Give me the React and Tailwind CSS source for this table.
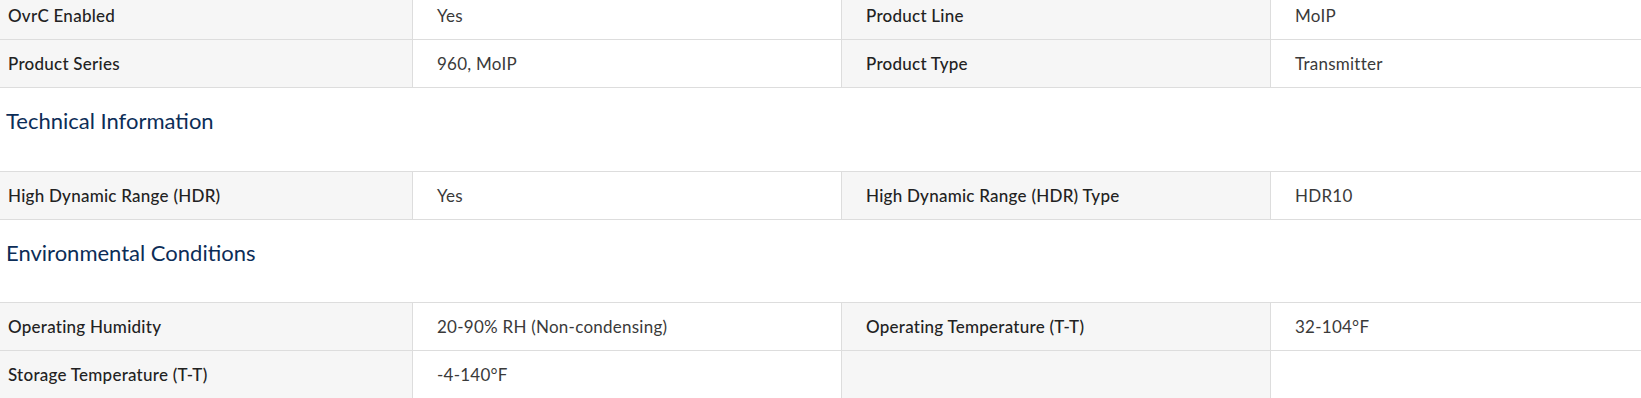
const sections = [
  {
    title: null,
    rows: [
      ["OvrC Enabled", "Yes", "Product Line", "MoIP"],
      ["Product Series", "960, MoIP", "Product Type", "Transmitter"],
    ],
  },
  {
    title: "Technical Information",
    height: "h-[83px]",
    rows: [["High Dynamic Range (HDR)", "Yes", "High Dynamic Range (HDR) Type", "HDR10"]],
  },
  {
    title: "Environmental Conditions",
    height: "h-[82px]",
    rows: [
      ["Operating Humidity", "20-90% RH (Non-condensing)", "Operating Temperature (T-T)", "32-104°F"],
      ["Storage Temperature (T-T)", "-4-140°F", "", ""],
    ],
  },
];

function SpecRow({ row }) {
  const [label1, value1, label2, value2] = row;
  return (
    <div className="grid grid-cols-[413px_429px_429px_1fr] h-[48px] border-b border-[#dddddd] text-[17px] tracking-[0.25px]">
      <div className="flex items-center bg-[#f6f6f6] border-r border-[#dddddd] pl-2 font-medium text-[#222222]">
        {label1}
      </div>
      <div className="flex items-center bg-white border-r border-[#dddddd] pl-6 text-[#3a3a3a]">
        {value1}
      </div>
      <div className="flex items-center bg-[#f6f6f6] border-r border-[#dddddd] pl-6 font-medium text-[#222222]">
        {label2}
      </div>
      <div className="flex items-center bg-white pl-6 text-[#3a3a3a]">
        {value2}
      </div>
    </div>
  );
}

export default function App() {
  return (
    <div className="w-[1641px] h-[398px] overflow-hidden bg-white font-['Lato','Liberation_Sans',sans-serif]">
      <div className="-mt-2">
        {sections.map((section, i) => (
          <div key={i}>
            {section.title && (
              <div className={`${section.height} pt-[18px] pl-[6px]`}>
                <h2 className="text-[22px] leading-[30px] font-normal text-[#0c2d57]">{section.title}</h2>
              </div>
            )}
            <div className={section.title ? "border-t border-[#dddddd]" : ""}>
              {section.rows.map((row, j) => (
                <SpecRow key={j} row={row} />
              ))}
            </div>
          </div>
        ))}
      </div>
    </div>
  );
}
